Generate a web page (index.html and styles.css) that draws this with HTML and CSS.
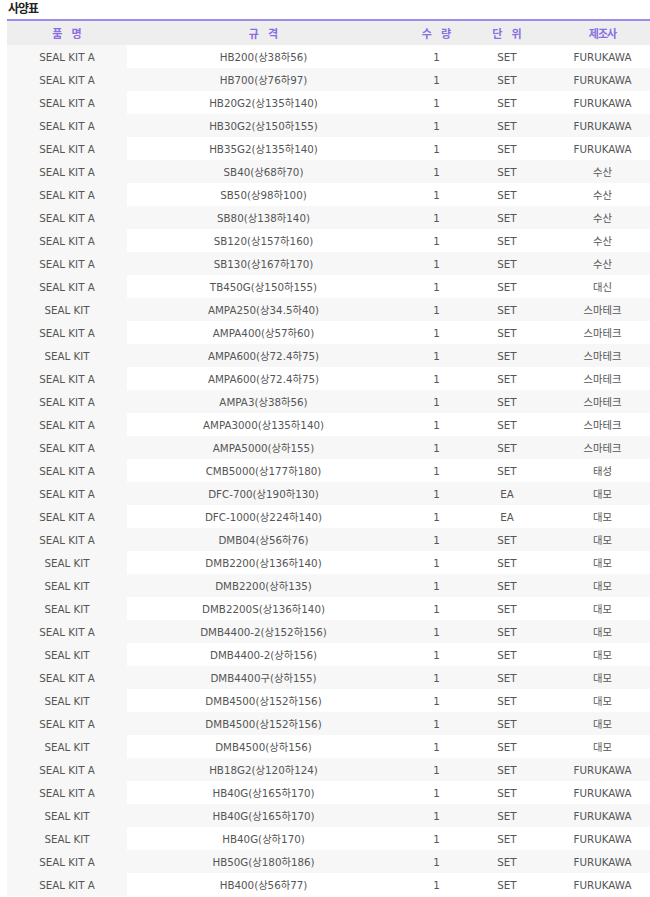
FILE: index.html
```html
<!DOCTYPE html>
<html lang="ko">
<head>
<meta charset="utf-8">
<title>사양표</title>
<link rel="stylesheet" href="styles.css">
</head>
<body>
<div class="page">
  <h1 class="title">사양표</h1>
  <table class="spec">
    <colgroup>
      <col class="c1"><col class="c2"><col class="c3"><col class="c4"><col class="c5">
    </colgroup>
    <thead>
      <tr><th>품 명</th><th>규 격</th><th>수 량</th><th>단 위</th><th class="tight">제조사</th></tr>
    </thead>
    <tbody>
      <tr><td>SEAL KIT A</td><td>HB200(상38하56)</td><td>1</td><td>SET</td><td>FURUKAWA</td></tr>
      <tr><td>SEAL KIT A</td><td>HB700(상76하97)</td><td>1</td><td>SET</td><td>FURUKAWA</td></tr>
      <tr><td>SEAL KIT A</td><td>HB20G2(상135하140)</td><td>1</td><td>SET</td><td>FURUKAWA</td></tr>
      <tr><td>SEAL KIT A</td><td>HB30G2(상150하155)</td><td>1</td><td>SET</td><td>FURUKAWA</td></tr>
      <tr><td>SEAL KIT A</td><td>HB35G2(상135하140)</td><td>1</td><td>SET</td><td>FURUKAWA</td></tr>
      <tr><td>SEAL KIT A</td><td>SB40(상68하70)</td><td>1</td><td>SET</td><td>수산</td></tr>
      <tr><td>SEAL KIT A</td><td>SB50(상98하100)</td><td>1</td><td>SET</td><td>수산</td></tr>
      <tr><td>SEAL KIT A</td><td>SB80(상138하140)</td><td>1</td><td>SET</td><td>수산</td></tr>
      <tr><td>SEAL KIT A</td><td>SB120(상157하160)</td><td>1</td><td>SET</td><td>수산</td></tr>
      <tr><td>SEAL KIT A</td><td>SB130(상167하170)</td><td>1</td><td>SET</td><td>수산</td></tr>
      <tr><td>SEAL KIT A</td><td>TB450G(상150하155)</td><td>1</td><td>SET</td><td>대신</td></tr>
      <tr><td>SEAL KIT</td><td>AMPA250(상34.5하40)</td><td>1</td><td>SET</td><td>스마테크</td></tr>
      <tr><td>SEAL KIT A</td><td>AMPA400(상57하60)</td><td>1</td><td>SET</td><td>스마테크</td></tr>
      <tr><td>SEAL KIT</td><td>AMPA600(상72.4하75)</td><td>1</td><td>SET</td><td>스마테크</td></tr>
      <tr><td>SEAL KIT A</td><td>AMPA600(상72.4하75)</td><td>1</td><td>SET</td><td>스마테크</td></tr>
      <tr><td>SEAL KIT A</td><td>AMPA3(상38하56)</td><td>1</td><td>SET</td><td>스마테크</td></tr>
      <tr><td>SEAL KIT A</td><td>AMPA3000(상135하140)</td><td>1</td><td>SET</td><td>스마테크</td></tr>
      <tr><td>SEAL KIT A</td><td>AMPA5000(상하155)</td><td>1</td><td>SET</td><td>스마테크</td></tr>
      <tr><td>SEAL KIT A</td><td>CMB5000(상177하180)</td><td>1</td><td>SET</td><td>태성</td></tr>
      <tr><td>SEAL KIT A</td><td>DFC-700(상190하130)</td><td>1</td><td>EA</td><td>대모</td></tr>
      <tr><td>SEAL KIT A</td><td>DFC-1000(상224하140)</td><td>1</td><td>EA</td><td>대모</td></tr>
      <tr><td>SEAL KIT A</td><td>DMB04(상56하76)</td><td>1</td><td>SET</td><td>대모</td></tr>
      <tr><td>SEAL KIT</td><td>DMB2200(상136하140)</td><td>1</td><td>SET</td><td>대모</td></tr>
      <tr><td>SEAL KIT</td><td>DMB2200(상하135)</td><td>1</td><td>SET</td><td>대모</td></tr>
      <tr><td>SEAL KIT</td><td>DMB2200S(상136하140)</td><td>1</td><td>SET</td><td>대모</td></tr>
      <tr><td>SEAL KIT A</td><td>DMB4400-2(상152하156)</td><td>1</td><td>SET</td><td>대모</td></tr>
      <tr><td>SEAL KIT</td><td>DMB4400-2(상하156)</td><td>1</td><td>SET</td><td>대모</td></tr>
      <tr><td>SEAL KIT A</td><td>DMB4400구(상하155)</td><td>1</td><td>SET</td><td>대모</td></tr>
      <tr><td>SEAL KIT</td><td>DMB4500(상152하156)</td><td>1</td><td>SET</td><td>대모</td></tr>
      <tr><td>SEAL KIT A</td><td>DMB4500(상152하156)</td><td>1</td><td>SET</td><td>대모</td></tr>
      <tr><td>SEAL KIT</td><td>DMB4500(상하156)</td><td>1</td><td>SET</td><td>대모</td></tr>
      <tr><td>SEAL KIT A</td><td>HB18G2(상120하124)</td><td>1</td><td>SET</td><td>FURUKAWA</td></tr>
      <tr><td>SEAL KIT A</td><td>HB40G(상165하170)</td><td>1</td><td>SET</td><td>FURUKAWA</td></tr>
      <tr><td>SEAL KIT</td><td>HB40G(상165하170)</td><td>1</td><td>SET</td><td>FURUKAWA</td></tr>
      <tr><td>SEAL KIT</td><td>HB40G(상하170)</td><td>1</td><td>SET</td><td>FURUKAWA</td></tr>
      <tr><td>SEAL KIT A</td><td>HB50G(상180하186)</td><td>1</td><td>SET</td><td>FURUKAWA</td></tr>
      <tr><td>SEAL KIT A</td><td>HB400(상56하77)</td><td>1</td><td>SET</td><td>FURUKAWA</td></tr>
    </tbody>
  </table>
</div>
</body>
</html>
```

FILE: styles.css
```css
html, body {
  margin: 0;
  padding: 0;
  background: #ffffff;
  overflow: hidden;
}

.page {
  padding-left: 7px;
  font-family: "DejaVu Sans", "Noto Sans CJK KR", sans-serif;
}

.title {
  margin: 0;
  height: 19px;
  padding-left: 1px;
  font-family: "Noto Sans CJK KR", sans-serif;
  font-size: 12px;
  font-weight: bold;
  line-height: 16px;
  letter-spacing: -1px;
  color: #222222;
}

.spec {
  width: 657px;
  border-collapse: collapse;
  border-spacing: 0;
  table-layout: fixed;
  border-top: 1px solid #7a68d8;
}

.c1 { width: 120px; }
.c2 { width: 273px; }
.c3 { width: 73px; }
.c4 { width: 68px; }
.c5 { width: 123px; }

.spec thead th {
  height: 24px;
  padding: 0;
  background: #eeeeee;
  border-top: 2px solid #9a8ce8;
  font-family: "Noto Sans CJK KR", sans-serif;
  font-size: 11px;
  font-weight: bold;
  color: #8a6ee4;
  word-spacing: 6px;
  text-align: center;
  vertical-align: middle;
}

.spec thead th.tight {
  letter-spacing: -1px;
}

.spec tbody td {
  height: 23px;
  padding: 0;
  font-size: 10.3px;
  color: #555555;
  text-align: center;
  vertical-align: middle;
  white-space: nowrap;
  background: #ffffff;
}

.spec tbody tr:nth-child(even) td {
  background: #f7f7f7;
}

.spec tbody td:first-child {
  background: #f7f7f7;
}
```
